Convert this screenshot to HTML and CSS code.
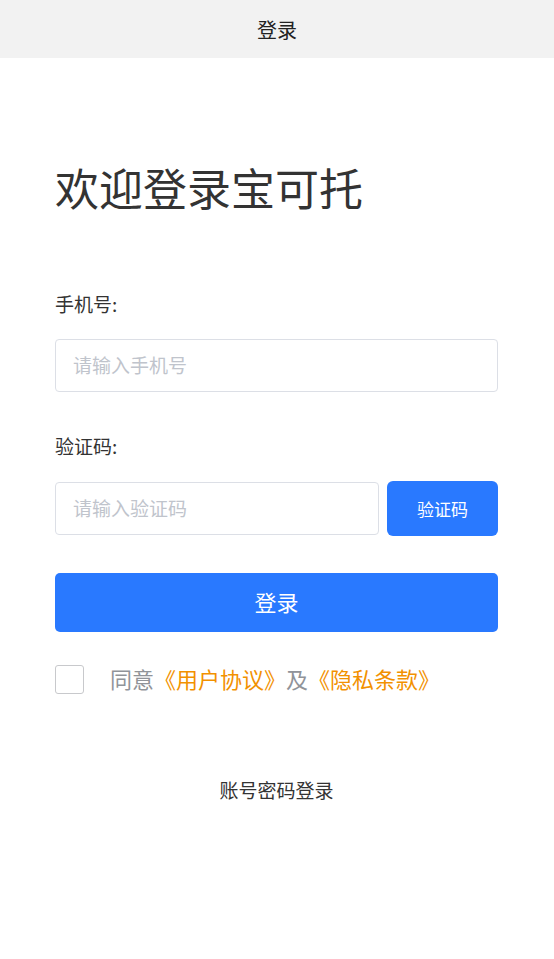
FILE: index.html
```html
<!DOCTYPE html>
<html lang="zh-CN">
<head>
    <meta charset="UTF-8">
    <title>登录</title>
    <link rel="stylesheet" href="styles.css">
</head>
<body>
    <div class="nav-bar">登录</div>

    <div class="page">
        <h1 class="welcome">欢迎登录宝可托</h1>

        <div class="field">
            <div class="field-label">手机号:</div>
            <input class="field-input" type="text" placeholder="请输入手机号">
        </div>

        <div class="field">
            <div class="field-label">验证码:</div>
            <div class="code-row">
                <input class="field-input code-input" type="text" placeholder="请输入验证码">
                <button class="code-btn">验证码</button>
            </div>
        </div>

        <button class="login-btn">登录</button>

        <div class="agree-row">
            <span class="check-box"></span>
            <span class="agree-text">同意<span class="link">《用户协议》</span>及<span class="link">《隐私条款》</span></span>
        </div>

        <div class="switch-mode">账号密码登录</div>
    </div>
</body>
</html>
```

FILE: styles.css
```css
body {
    margin: 0;
    font-family: "Noto Sans CJK SC", "Noto Sans", sans-serif;
    background-color: #fff;
    color: #333;
}
.nav-bar {
    height: 58px;
    line-height: 60px;
    text-align: center;
    font-size: 20px;
    background-color: #f2f2f2;
    color: #222;
}
.page {
    padding: 99px 56px 0 55px;
}
.welcome {
    margin: 0;
    font-size: 44px;
    font-weight: normal;
    line-height: 60px;
    color: #333;
}
.field {
    margin-top: 74px;
}
.field + .field {
    margin-top: 41px;
}
.field-label {
    font-size: 19px;
    line-height: 30px;
    color: #333;
    margin: -2px 0 20px;
}
.field-input {
    display: block;
    box-sizing: border-box;
    width: 100%;
    height: 53px;
    padding: 0 17px 3px;
    border: 1px solid #dcdfe6;
    border-radius: 4px;
    font-family: inherit;
    font-size: 19px;
    color: #333;
    outline: none;
}
.field-input::placeholder {
    color: #c0c4cc;
}
.code-row {
    display: flex;
    align-items: center;
    gap: 8px;
}
.code-input {
    flex: 1;
    width: auto;
}
.code-btn {
    width: 111px;
    height: 55px;
    padding-bottom: 2px;
    border: none;
    border-radius: 6px;
    background-color: #2979ff;
    color: #fff;
    font-family: inherit;
    font-size: 17px;
}
.login-btn {
    display: block;
    width: 100%;
    height: 59px;
    margin-top: 37px;
    padding-bottom: 5px;
    border: none;
    border-radius: 5px;
    background-color: #2979ff;
    color: #fff;
    font-family: inherit;
    font-size: 22px;
}
.agree-row {
    display: flex;
    align-items: center;
    margin-top: 32px;
}
.check-box {
    box-sizing: border-box;
    width: 29px;
    height: 29px;
    border: 1px solid #c8c9cc;
    border-radius: 3px;
}
.agree-text {
    margin-left: 26px;
    font-size: 22px;
    line-height: 30px;
    color: #909399;
    position: relative;
    top: -1px;
}
.link {
    color: #f29100;
}
.switch-mode {
    margin-top: 81px;
    text-align: center;
    font-size: 19px;
    line-height: 30px;
    color: #333;
}
```
